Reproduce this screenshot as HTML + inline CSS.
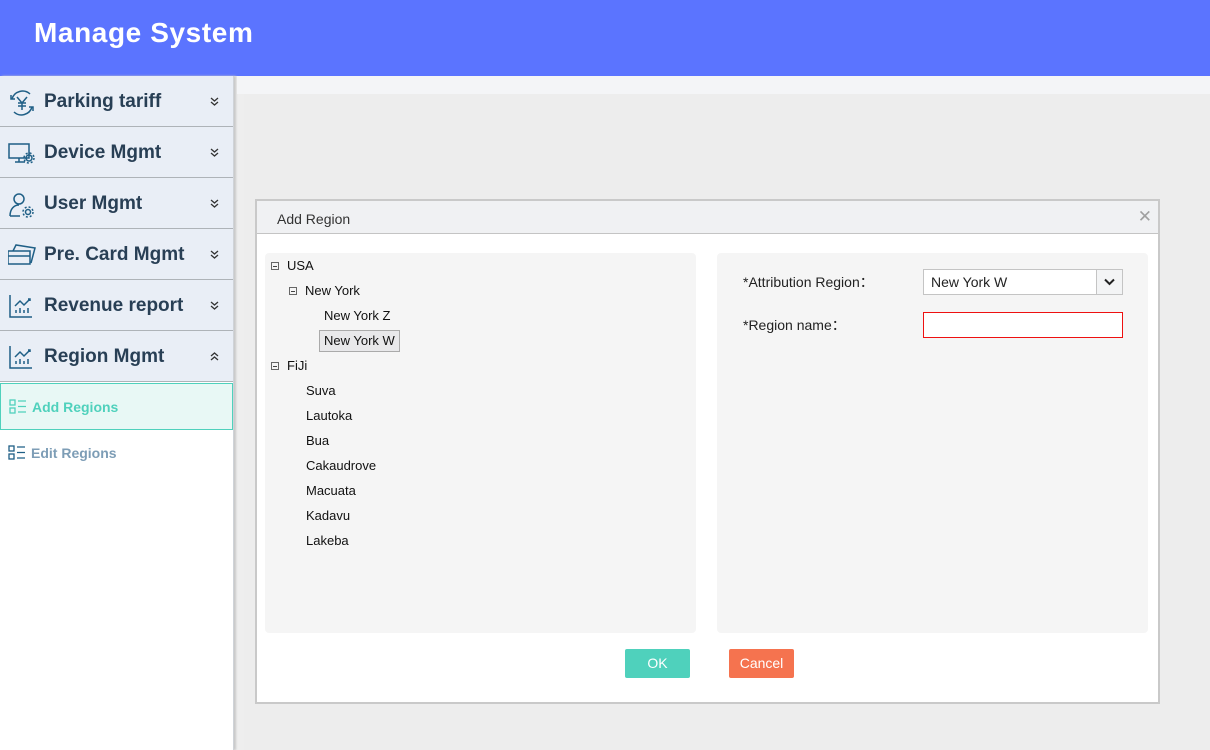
<!DOCTYPE html>
<html><head><meta charset="utf-8"><style>
*{margin:0;padding:0;box-sizing:border-box}
body{width:1210px;height:750px;overflow:hidden;font-family:"Liberation Sans","DejaVu Sans",sans-serif;background:#eeeeee;position:relative}
.hdr{position:absolute;left:0;top:0;width:1210px;height:76px;background:#5b74ff;color:#fff;font-size:28px;font-weight:bold;letter-spacing:0.6px;padding:17px 0 0 34px}
.side{position:absolute;left:0;top:76px;width:234px;height:674px;background:#fff;border-right:1px solid #cfd3d8;box-shadow:2px 0 2px #c8c8c8}
.it{height:51px;background:#e9eef6;border-bottom:1px solid #aeb3b8;position:relative;font-weight:bold;font-size:19px;color:#283f55;padding:15px 0 0 44px}
.it svg.ic{position:absolute;left:8px;top:13px}
.it svg.ch{position:absolute;left:210px;top:21px}
.sub{height:47px;font-weight:bold;font-size:14px;position:relative;padding:15px 0 0 31px}
.sub svg{position:absolute;left:8px;top:15px}
.strip{position:absolute;left:237px;top:76px;width:973px;height:18px;background:#f4f5f7}
.main{position:absolute;left:244px;top:94px;width:966px;height:656px;background:#ededed}
.dlg{position:absolute;left:255px;top:199px;width:905px;height:505px;border:2px solid #c9c9c9;background:#fff}
.tt{height:33px;background:#f0f1f3;border-bottom:1px solid #c4c4c4;font-size:14px;color:#333;padding:10px 0 0 20px;position:relative}
.x{position:absolute;right:6px;top:6px;color:#a0a0a0;font-size:17px;font-weight:bold}
.lp{position:absolute;left:8px;top:52px;width:431px;height:380px;background:#f5f5f5;border-radius:4px;font-size:13px;color:#111}
.rp{position:absolute;left:460px;top:52px;width:431px;height:380px;background:#f5f5f5;border-radius:4px;font-size:14px;color:#222}
.n{position:absolute;height:20px;line-height:20px}
.bx{display:inline-block;width:8px;height:8px;border:1px solid #666;position:relative;margin-right:8px;vertical-align:0px}
.bx:after{content:"";position:absolute;left:1px;top:3px;width:4px;height:1px;background:#444}
.btn{position:absolute;top:448px;width:65px;height:29px;color:#fff;font-size:14px;text-align:center;line-height:29px;border-radius:2px}
</style></head><body>
<div class="hdr">Manage System</div>
<div class="side">
<div class="it"><svg class="ic" width="28" height="28" viewBox="0 0 28 28" fill="none" stroke="#1f5f86" stroke-width="1.5"><path d="M4 10 A11 11 0 0 1 22 5"/><path d="M24 18 A11 11 0 0 1 6 23"/><path d="M3 6 v4 h4"/><path d="M25 22 v-4 h-4"/><path d="M9 8 l5 6 l5-6 M14 14 v7 M10 14 h8 M10 17 h8"/></svg>Parking tariff<svg class="ch" width="9" height="9" viewBox="0 0 9 9" fill="none" stroke="#333" stroke-width="1.3"><path d="M1 1 l3.5 3 l3.5-3 M1 5 l3.5 3 l3.5-3"/></svg></div>
<div class="it"><svg class="ic" width="28" height="28" viewBox="0 0 28 28" fill="none" stroke="#1f5f86" stroke-width="1.5"><rect x="1" y="4" width="20" height="14"/><path d="M7 22 h10 M11 18 v4"/><circle cx="21" cy="18" r="3"/><circle cx="21" cy="18" r="5" stroke-dasharray="2 2"/></svg>Device Mgmt<svg class="ch" width="9" height="9" viewBox="0 0 9 9" fill="none" stroke="#333" stroke-width="1.3"><path d="M1 1 l3.5 3 l3.5-3 M1 5 l3.5 3 l3.5-3"/></svg></div>
<div class="it"><svg class="ic" width="28" height="28" viewBox="0 0 28 28" fill="none" stroke="#1f5f86" stroke-width="1.5"><circle cx="11" cy="8" r="5"/><path d="M2 25 c0-7 4-11 9-11"/><path d="M2 25 h10"/><circle cx="20" cy="21" r="2.5"/><circle cx="20" cy="21" r="5" stroke-dasharray="2 2"/></svg>User Mgmt<svg class="ch" width="9" height="9" viewBox="0 0 9 9" fill="none" stroke="#333" stroke-width="1.3"><path d="M1 1 l3.5 3 l3.5-3 M1 5 l3.5 3 l3.5-3"/></svg></div>
<div class="it"><svg class="ic" width="28" height="28" viewBox="0 0 28 28" fill="none" stroke="#1f5f86" stroke-width="1.5"><rect x="0" y="9" width="22" height="13"/><path d="M0 14 h22"/><path d="M5 9 l3-6 l19 3 l-4 15"/></svg>Pre. Card Mgmt<svg class="ch" width="9" height="9" viewBox="0 0 9 9" fill="none" stroke="#333" stroke-width="1.3"><path d="M1 1 l3.5 3 l3.5-3 M1 5 l3.5 3 l3.5-3"/></svg></div>
<div class="it"><svg class="ic" width="28" height="28" viewBox="0 0 28 28" fill="none" stroke="#1f5f86" stroke-width="1.5"><path d="M2 2 v22 h22"/><path d="M7 13 l5-5 l4 4 l6-6 M20 6 h2 v2"/><path d="M8 20 v-3 M12 20 v-5 M16 20 v-3 M20 20 v-5"/></svg>Revenue report<svg class="ch" width="9" height="9" viewBox="0 0 9 9" fill="none" stroke="#333" stroke-width="1.3"><path d="M1 1 l3.5 3 l3.5-3 M1 5 l3.5 3 l3.5-3"/></svg></div>
<div class="it"><svg class="ic" width="28" height="28" viewBox="0 0 28 28" fill="none" stroke="#1f5f86" stroke-width="1.5"><path d="M2 2 v22 h22"/><path d="M7 13 l5-5 l4 4 l6-6 M20 6 h2 v2"/><path d="M8 20 v-3 M12 20 v-5 M16 20 v-3 M20 20 v-5"/></svg>Region Mgmt<svg class="ch" width="9" height="9" viewBox="0 0 9 9" fill="none" stroke="#333" stroke-width="1.3"><path d="M1 4 l3.5-3 l3.5 3 M1 8 l3.5-3 l3.5 3"/></svg></div>
<div class="sub" style="background:#e8f8f5;border:1px solid #4fd1bc;color:#4fd1bc;margin-top:1px;width:233px"><svg width="18" height="16" viewBox="0 0 18 16" fill="none" stroke="#4fd1bc" stroke-width="1.3"><rect x="1" y="1" width="5" height="5"/><rect x="1" y="9" width="5" height="5"/><path d="M9 2 h8 M9 7.5 h8 M9 13 h8"/></svg>Add Regions</div>
<div class="sub" style="color:#7d9db6"><svg width="18" height="16" viewBox="0 0 18 16" fill="none" stroke="#1f5f86" stroke-width="1.3"><rect x="1" y="1" width="5" height="5"/><rect x="1" y="9" width="5" height="5"/><path d="M9 2 h8 M9 7.5 h8 M9 13 h8"/></svg>Edit Regions</div>
</div>
<div class="strip"></div>
<div class="main"></div>
<div class="dlg">
<div class="tt">Add Region<span class="x">✕</span></div>
<div class="lp">
<div class="n" style="left:6px;top:3px"><span class="bx"></span>USA</div>
<div class="n" style="left:24px;top:28px"><span class="bx"></span>New York</div>
<div class="n" style="left:59px;top:53px">New York Z</div>
<div class="n" style="left:54px;top:77px;border:1px solid #aaa;background:#e8e8ea;padding:0 4px;height:22px">New York W</div>
<div class="n" style="left:6px;top:103px"><span class="bx"></span>FiJi</div>
<div class="n" style="left:41px;top:128px">Suva</div>
<div class="n" style="left:41px;top:153px">Lautoka</div>
<div class="n" style="left:41px;top:178px">Bua</div>
<div class="n" style="left:41px;top:203px">Cakaudrove</div>
<div class="n" style="left:41px;top:228px">Macuata</div>
<div class="n" style="left:41px;top:253px">Kadavu</div>
<div class="n" style="left:41px;top:278px">Lakeba</div>
</div>
<div class="rp">
<div class="n" style="left:26px;top:19px">*Attribution Region：</div>
<div style="position:absolute;left:206px;top:16px;width:200px;height:26px;border:1px solid #c4c4c4;background:#fff;font-size:14px;padding:4px 0 0 7px">New York W<span style="position:absolute;right:0;top:0;width:26px;height:24px;border-left:1px solid #c4c4c4;background:#f3f4f5"><svg style="position:absolute;left:7px;top:8px" width="11" height="8" viewBox="0 0 11 8" fill="none" stroke="#222" stroke-width="2"><path d="M1 1.5 l4.5 4.5 l4.5-4.5"/></svg></span></div>
<div class="n" style="left:26px;top:62px">*Region name：</div>
<div style="position:absolute;left:206px;top:59px;width:200px;height:26px;border:1px solid #ee1111;background:#fff"></div>
</div>
<div class="btn" style="left:368px;background:#4fd1bc">OK</div>
<div class="btn" style="left:472px;background:#f5734f">Cancel</div>
</div>
</body></html>
